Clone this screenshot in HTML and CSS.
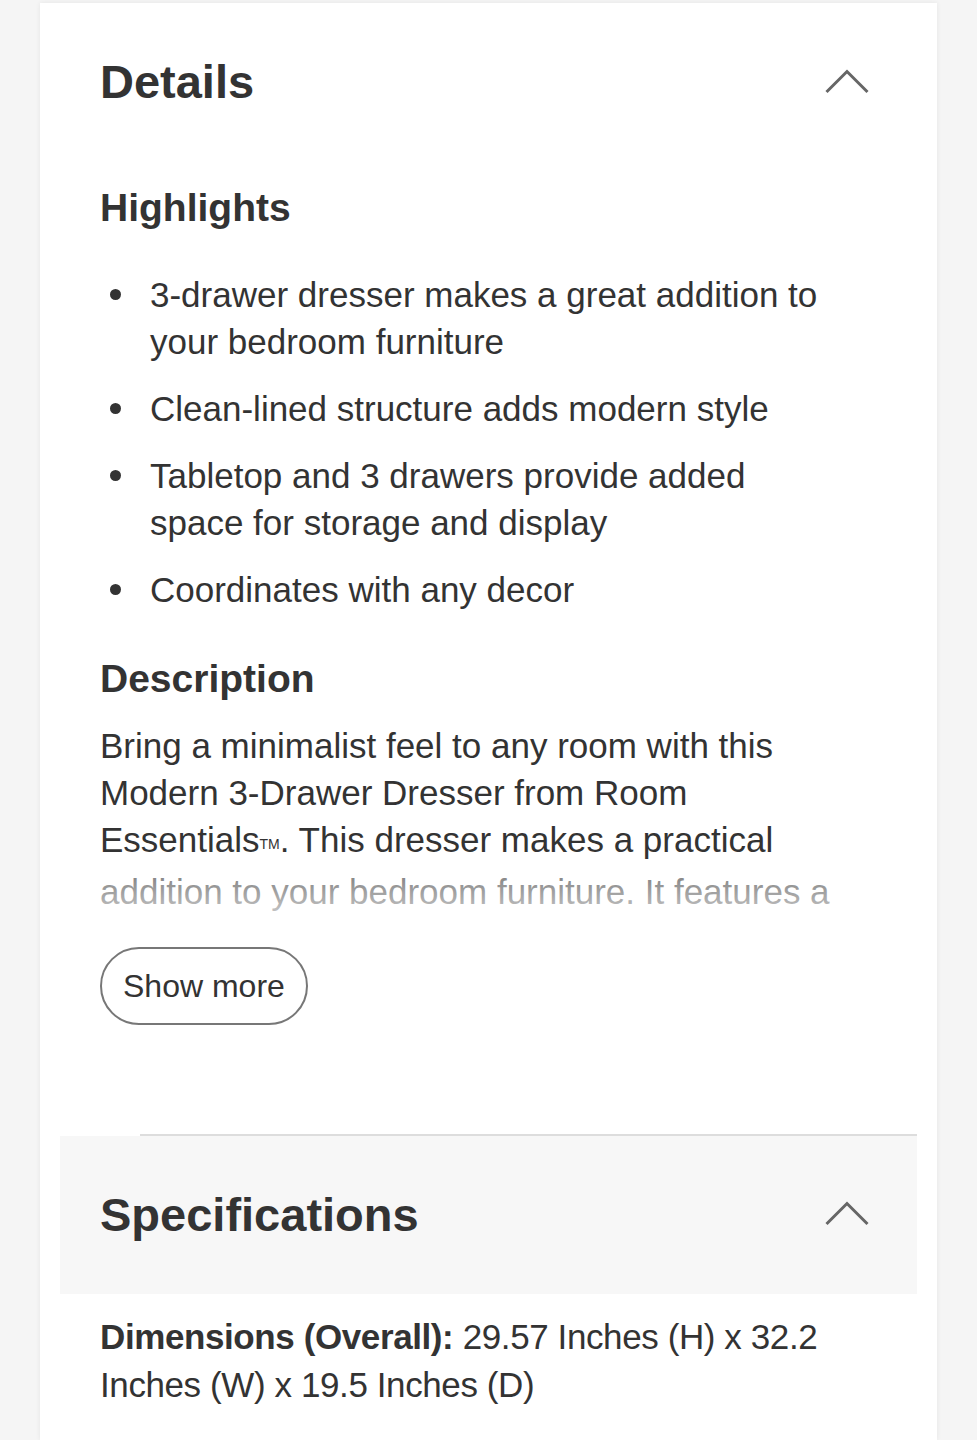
FILE: index.html
```html
<!DOCTYPE html>
<html lang="en">
<head>
<meta charset="utf-8">
<title>Details</title>
<link rel="stylesheet" href="styles.css">
</head>
<body>
<div class="card">
  <section class="panel">
    <div class="panel-head">
      <h2 class="panel-title">Details</h2>
      <svg class="chev" width="44" height="26" viewBox="0 0 44 26"><polyline points="1.5,24 22,3.5 42.5,24" fill="none" stroke="#666" stroke-width="3"/></svg>
    </div>
    <div class="panel-body">
      <h3 class="sub">Highlights</h3>
      <ul class="bullets">
        <li>3-drawer dresser makes a great addition to your bedroom furniture</li>
        <li>Clean-lined structure adds modern style</li>
        <li>Tabletop and 3 drawers provide added space for storage and display</li>
        <li>Coordinates with any decor</li>
      </ul>
      <h3 class="sub sub-desc">Description</h3>
      <div class="desc">
        <p>Bring a minimalist feel to any room with this Modern 3-Drawer Dresser from Room Essentials<span class="tm">TM</span>. This dresser makes a practical addition to your bedroom furniture. It features a clean-lined design with three spacious drawers for keeping clothes and accessories organized.</p>
      </div>
      <button class="more">Show more</button>
    </div>
  </section>
  <section class="panel panel-spec">
    <div class="divider"></div>
    <div class="panel-head spec-head">
      <h2 class="panel-title">Specifications</h2>
      <svg class="chev" width="44" height="26" viewBox="0 0 44 26"><polyline points="1.5,24 22,3.5 42.5,24" fill="none" stroke="#666" stroke-width="3"/></svg>
    </div>
    <p class="spec"><b>Dimensions (Overall):</b> 29.57 Inches (H) x 32.2 Inches (W) x 19.5 Inches (D)</p>
  </section>
</div>
</body>
</html>
```
FILE: styles.css
```css
html, body {
  margin: 0;
  padding: 0;
}
body {
  background: #f5f5f5;
  font-family: "Liberation Sans", Arial, sans-serif;
  color: #333;
  padding-top: 3px;
}
.card {
  margin: 0 40px;
  background: #fff;
  min-height: 1437px;
  box-shadow: 0 0 5px rgba(0, 0, 0, 0.07);
  padding: 0 20px;
}
.panel-head {
  display: flex;
  align-items: center;
  justify-content: space-between;
  padding: 51px 48px 0 40px;
}
.panel-title {
  margin: 0;
  font-size: 47px;
  line-height: 56px;
  font-weight: 700;
  color: #333;
}
.chev {
  display: block;
  margin-top: -3px;
}
.panel-body {
  padding: 0 40px;
}
.sub {
  margin: 75px 0 0;
  font-size: 39px;
  line-height: 46px;
  font-weight: 700;
}
.sub-desc {
  margin-top: 43px;
}
.bullets {
  list-style: none;
  margin: 40px 0 0;
  padding: 0;
  display: flex;
  flex-direction: column;
  gap: 20px;
}
.bullets li {
  display: grid;
  grid-template-columns: 50px 1fr;
  font-size: 35px;
  line-height: 47px;
  padding-right: 40px;
}
.bullets li::before {
  content: "";
  width: 11px;
  height: 11px;
  border-radius: 50%;
  background: #333;
  margin: 18px 0 0 10px;
}
.desc {
  position: relative;
  margin-top: 20px;
  height: 190px;
  overflow: hidden;
}
.desc p {
  margin: 0;
  font-size: 35px;
  line-height: 47px;
  padding-right: 20px;
}
.desc::after {
  content: "";
  position: absolute;
  left: 0;
  right: 0;
  bottom: 0;
  height: 49px;
  background: linear-gradient(to bottom, rgba(255, 255, 255, 0.3), rgba(255, 255, 255, 0.7));
}
.tm {
  font-size: 14px;
  vertical-align: 3px;
}
.more {
  display: block;
  margin-top: 35px;
  height: 78px;
  padding: 0 21px;
  border: 2px solid #777;
  border-radius: 40px;
  background: #fff;
  color: #333;
  font-family: "Liberation Sans", Arial, sans-serif;
  font-size: 32px;
}
.panel-spec {
  margin-top: 109px;
}
.divider {
  height: 2px;
  background: #ddd;
  margin-left: 80px;
}
.spec-head {
  background: #f7f7f7;
  height: 158px;
  padding-top: 0;
  box-sizing: border-box;
}
.spec-head .chev {
  margin-top: -5px;
}
.spec {
  margin: 19px 0 0;
  padding: 0 40px;
  font-size: 35px;
  line-height: 48px;
  letter-spacing: -0.4px;
}
.spec b {
  font-weight: 700;
}
```
